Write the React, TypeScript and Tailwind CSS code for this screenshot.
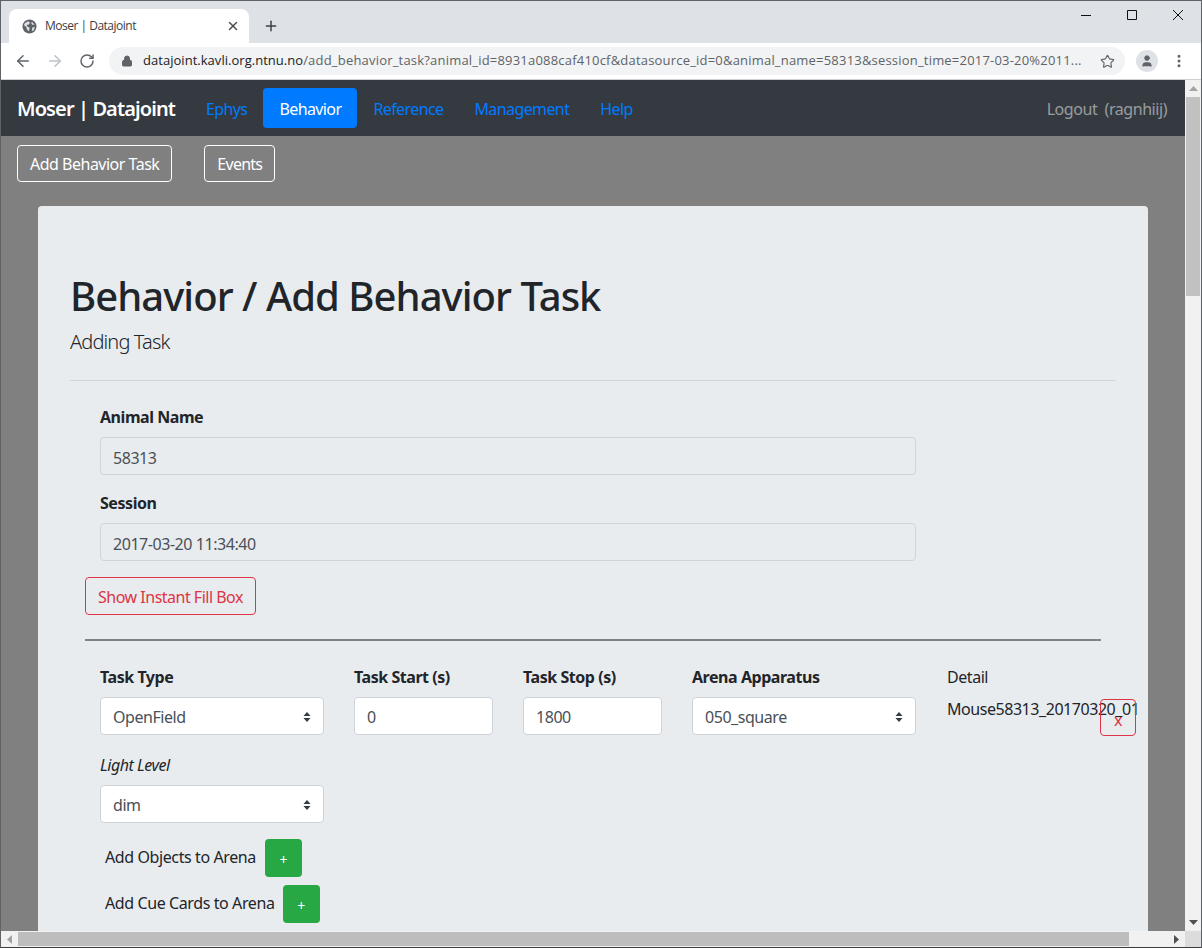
import { ArrowLeft, ArrowRight, RotateCw, Lock, Star, X, Plus, User, MoreVertical } from 'lucide-react';

const navLinks = ['Reference', 'Management', 'Help'];

function Chevrons() {
  return (
    <svg width="8" height="10" viewBox="0 0 8 10" className="shrink-0 text-[#343a40]">
      <path d="M4 0L7.5 4H0.5Z M4 10L0.5 6H7.5Z" fill="currentColor" />
    </svg>
  );
}

function Favicon() {
  return (
    <svg width="15" height="15" viewBox="0 0 16 16" className="shrink-0 mr-[8px]">
      <circle cx="8" cy="8" r="7.5" fill="#5f6368" />
      <path d="M3 4.5L6.5 2.5L8.5 4L7 6H5L5.5 8L8 9L7.5 13L5.5 11.5L4.5 8.5L2 6.5Z M10.5 2.8L13.5 6H11L9.8 4.5Z M11 9L13.8 8.5L12.5 12L10.5 13Z" fill="#dfe1e5" />
    </svg>
  );
}

function Select({ value, width }: { value: string; width: string }) {
  return (
    <div className={`${width} h-[38px] flex items-center justify-between bg-white border border-[#ced4da] rounded pl-3 pr-[12px] pt-[1px] text-[#495057]`}>
      <span>{value}</span>
      <Chevrons />
    </div>
  );
}

function Field({ label, value }: { label: string; value: string }) {
  return (
    <div className="mb-[16px]">
      <div className="font-bold text-[#212529] h-[24px] leading-[24px] mb-[8px]">{label}</div>
      <div className="w-[816px] h-[38px] flex items-center bg-[#e9ecef] border border-[#ced4da] rounded px-3 pt-[3px] text-[#495057]">{value}</div>
    </div>
  );
}

function Column({ label, ml, children }: { label: string; ml: string; children: React.ReactNode }) {
  return (
    <div className={ml}>
      <div className="font-bold text-[#212529] h-[24px] leading-[24px] mb-[8px]">{label}</div>
      {children}
    </div>
  );
}

function AddRow({ label, mb, gap }: { label: string; mb: string; gap: string }) {
  return (
    <div className={`flex items-center ml-[20px] ${mb}`}>
      <span className="text-[#212529] tracking-[-0.4px] -mt-[3px]">{label}</span>
      <div className={`${gap} w-[37px] h-[38px] bg-[#28a745] rounded flex items-center justify-center pt-[3px] text-white text-[14px]`}>+</div>
    </div>
  );
}

export default function App() {
  return (
    <div className="w-[1202px] h-[948px] overflow-hidden flex flex-col border border-[#5f6368] border-b-[#3c3c3c] font-['Noto_Sans',sans-serif] text-[16px] tracking-[-0.45px] bg-white">
      {/* Tab strip */}
      <div className="h-[42px] shrink-0 bg-[#dee1e6] flex items-end pl-[8px]">
        <div className="w-[240px] h-[34px] bg-white rounded-t-lg flex items-center pl-[13px] pr-[9px]">
          <Favicon />
          <span className="flex-1 font-['Open_Sans',sans-serif] text-[12px] tracking-[-0.5px] text-[#3c4043]">Moser | Datajoint</span>
          <X size={14} strokeWidth={2.4} className="text-[#45484c]" />
        </div>
        <Plus size={16} strokeWidth={2.2} className="text-[#3c4043] ml-[14px] mb-[9px]" />
        <div className="flex-1" />
        <div className="flex items-center self-start pt-[9px] text-[#111]">
          <svg width="10" height="10" viewBox="0 0 10 10" className="mr-[36px]"><path d="M0 5.5H10" stroke="currentColor" /></svg>
          <svg width="10" height="10" viewBox="0 0 10 10" className="mr-[36px]"><path d="M0.5 0.5H9.5V9.5H0.5Z" stroke="currentColor" fill="none" /></svg>
          <svg width="10" height="10" viewBox="0 0 10 10" className="mr-[18px]"><path d="M0 0L10 10M10 0L0 10" stroke="currentColor" /></svg>
        </div>
      </div>

      {/* Toolbar */}
      <div className="h-[37px] shrink-0 bg-white flex items-center border-b border-[#cfd1d4] text-[#5f6368]">
        <ArrowLeft size={18} strokeWidth={2} className="ml-[13px]" />
        <ArrowRight size={18} strokeWidth={2} className="ml-[14px] text-[#bdc1c6]" />
        <RotateCw size={16} strokeWidth={2.2} className="ml-[15px]" />
        <div className="ml-[14px] w-[1016px] h-[28px] bg-[#f1f3f4] rounded-full flex items-center pl-[12px] pr-[10px]">
          <Lock size={12} fill="#5f6368" strokeWidth={2} />
          <div className="ml-[10px] flex-1 text-[13px] font-['Open_Sans',sans-serif] whitespace-nowrap overflow-hidden">
            <span className="text-[#202124] tracking-[0.03px]">datajoint.kavli.org.ntnu.no</span>
            <span className="text-[#5f6368] tracking-[0.2px]">/add_behavior_task?animal_id=8931a088caf410cf&amp;datasource_id=0&amp;animal_name=58313&amp;session_time=2017-03-20%2011...</span>
          </div>
          <Star size={15} strokeWidth={1.8} />
        </div>
        <div className="ml-[11px] w-[22px] h-[22px] rounded-full bg-[#dee1e6] flex items-center justify-center">
          <User size={14} fill="#5f6368" strokeWidth={1.5} />
        </div>
        <MoreVertical size={16} strokeWidth={2.5} className="ml-[13px]" />
      </div>

      {/* Viewport */}
      <div className="flex-1 min-h-0 flex flex-col">
        <div className="flex-1 min-h-0 flex">
          <div className="flex-1 min-w-0 overflow-hidden bg-[#808080]">
            <nav className="h-[56px] bg-[#343a40] flex items-center pl-[16px] pr-[18px] tracking-[-0.6px]">
              <span className="text-[20px] font-semibold text-white tracking-[-0.9px] mr-[31px] pt-[2px]">Moser | Datajoint</span>
              <span className="text-[#007bff] mr-[16px] pt-[2px]">Ephys</span>
              <span className="h-[40px] w-[94px] bg-[#007bff] text-white rounded flex items-center justify-center mr-[16px] pt-[2px]">Behavior</span>
              {navLinks.map((l) => (
                <span key={l} className="text-[#007bff] mr-[31px] pt-[2px]">{l}</span>
              ))}
              <span className="ml-auto text-white/50 whitespace-pre tracking-[-0.45px] pt-[2px]">Logout  (ragnhiij)</span>
            </nav>

            <div className="flex pl-[16px] pt-[9px] gap-[32px] text-white">
              <div className="h-[37px] px-[12px] border border-white rounded flex items-center tracking-[-0.5px]">Add Behavior Task</div>
              <div className="h-[37px] px-[12px] border border-white rounded flex items-center tracking-[-0.75px]">Events</div>
            </div>

            <div className="ml-[37px] mt-[24px] w-[1110px] h-[800px] bg-[#e9ecef] rounded pl-[32px] pr-[32px] pt-[66px]">
              <h1 className="text-[40px] leading-[48px] font-medium text-[#212529] tracking-[-0.96px] mb-[7px]">Behavior / Add Behavior Task</h1>
              <p className="text-[20px] leading-[30px] font-light text-[#212529] tracking-[-0.86px]">Adding Task</p>
              <hr className="mt-[23px] mb-[24px] border-[#d2d4d6]" />

              <div className="pl-[30px]">
                <Field label="Animal Name" value="58313" />
                <Field label="Session" value="2017-03-20 11:34:40" />
              </div>

              <div className="ml-[15px] w-[171px] h-[38px] border border-[#dc3545] text-[#dc3545] rounded flex items-center justify-center tracking-[-0.5px] pt-[1px]">Show Instant Fill Box</div>
              <hr className="ml-[15px] w-[1016px] mt-[24px] mb-[24px] border-t-2 border-[#808080]" />

              <div className="pl-[30px] flex items-start">
                <Column label="Task Type" ml="">
                  <Select value="OpenField" width="w-[224px]" />
                </Column>
                <Column label="Task Start (s)" ml="ml-[30px]">
                  <div className="w-[139px] h-[38px] bg-white border border-[#ced4da] rounded px-3 pt-[1px] flex items-center text-[#495057]">0</div>
                </Column>
                <Column label="Task Stop (s)" ml="ml-[30px]">
                  <div className="w-[139px] h-[38px] bg-white border border-[#ced4da] rounded px-3 pt-[1px] flex items-center text-[#495057]">1800</div>
                </Column>
                <Column label="Arena Apparatus" ml="ml-[30px]">
                  <Select value="050_square" width="w-[224px]" />
                </Column>
                <div className="ml-[31px] w-[153px] shrink-0 whitespace-nowrap text-[#212529]">
                  <div className="h-[24px] leading-[24px] mb-[8px]">Detail</div>
                  <div className="h-[24px] leading-[24px]">Mouse58313_20170320_01</div>
                </div>
                <div className="mt-[34px] w-[36px] h-[37px] shrink-0 border border-[#dc3545] text-[#dc3545] rounded flex items-center justify-center pt-[4px]">x</div>
              </div>

              <div className="pl-[30px] mt-[17px]">
                <div className="italic text-[#212529] h-[24px] leading-[24px] mb-[8px]">Light Level</div>
                <Select value="dim" width="w-[224px]" />
              </div>

              <div className="mt-[16px] pl-[15px]">
                <AddRow label="Add Objects to Arena" mb="mb-[8px]" gap="ml-[9px]" />
                <AddRow label="Add Cue Cards to Arena" mb="" gap="ml-[8px]" />
              </div>
            </div>
          </div>

          {/* Vertical scrollbar */}
          <div className="w-[16px] shrink-0 bg-[#f1f1f1] flex flex-col items-center">
            <svg width="9" height="5" viewBox="0 0 9 5" className="mt-[6px]"><path d="M4.5 0L9 5H0Z" fill="#a3a3a3" /></svg>
            <div className="mt-[6px] w-[14px] h-[199px] bg-[#c1c1c1]" />
            <svg width="9" height="5" viewBox="0 0 9 5" className="mt-auto mb-[6px]"><path d="M4.5 5L9 0H0Z" fill="#505050" /></svg>
          </div>
        </div>

        {/* Horizontal scrollbar */}
        <div className="h-[16px] shrink-0 bg-[#f1f1f1] flex items-center">
          <svg width="5" height="9" viewBox="0 0 5 9" className="ml-[6px]"><path d="M0 4.5L5 0V9Z" fill="#a3a3a3" /></svg>
          <div className="ml-[6px] w-[1111px] h-[14px] bg-[#bdbdbd]" />
          <svg width="5" height="9" viewBox="0 0 5 9" className="ml-auto mr-[6px]"><path d="M5 4.5L0 0V9Z" fill="#505050" /></svg>
          <div className="w-[16px] h-[16px] bg-[#dcdcdc]" />
        </div>
      </div>
    </div>
  );
}
